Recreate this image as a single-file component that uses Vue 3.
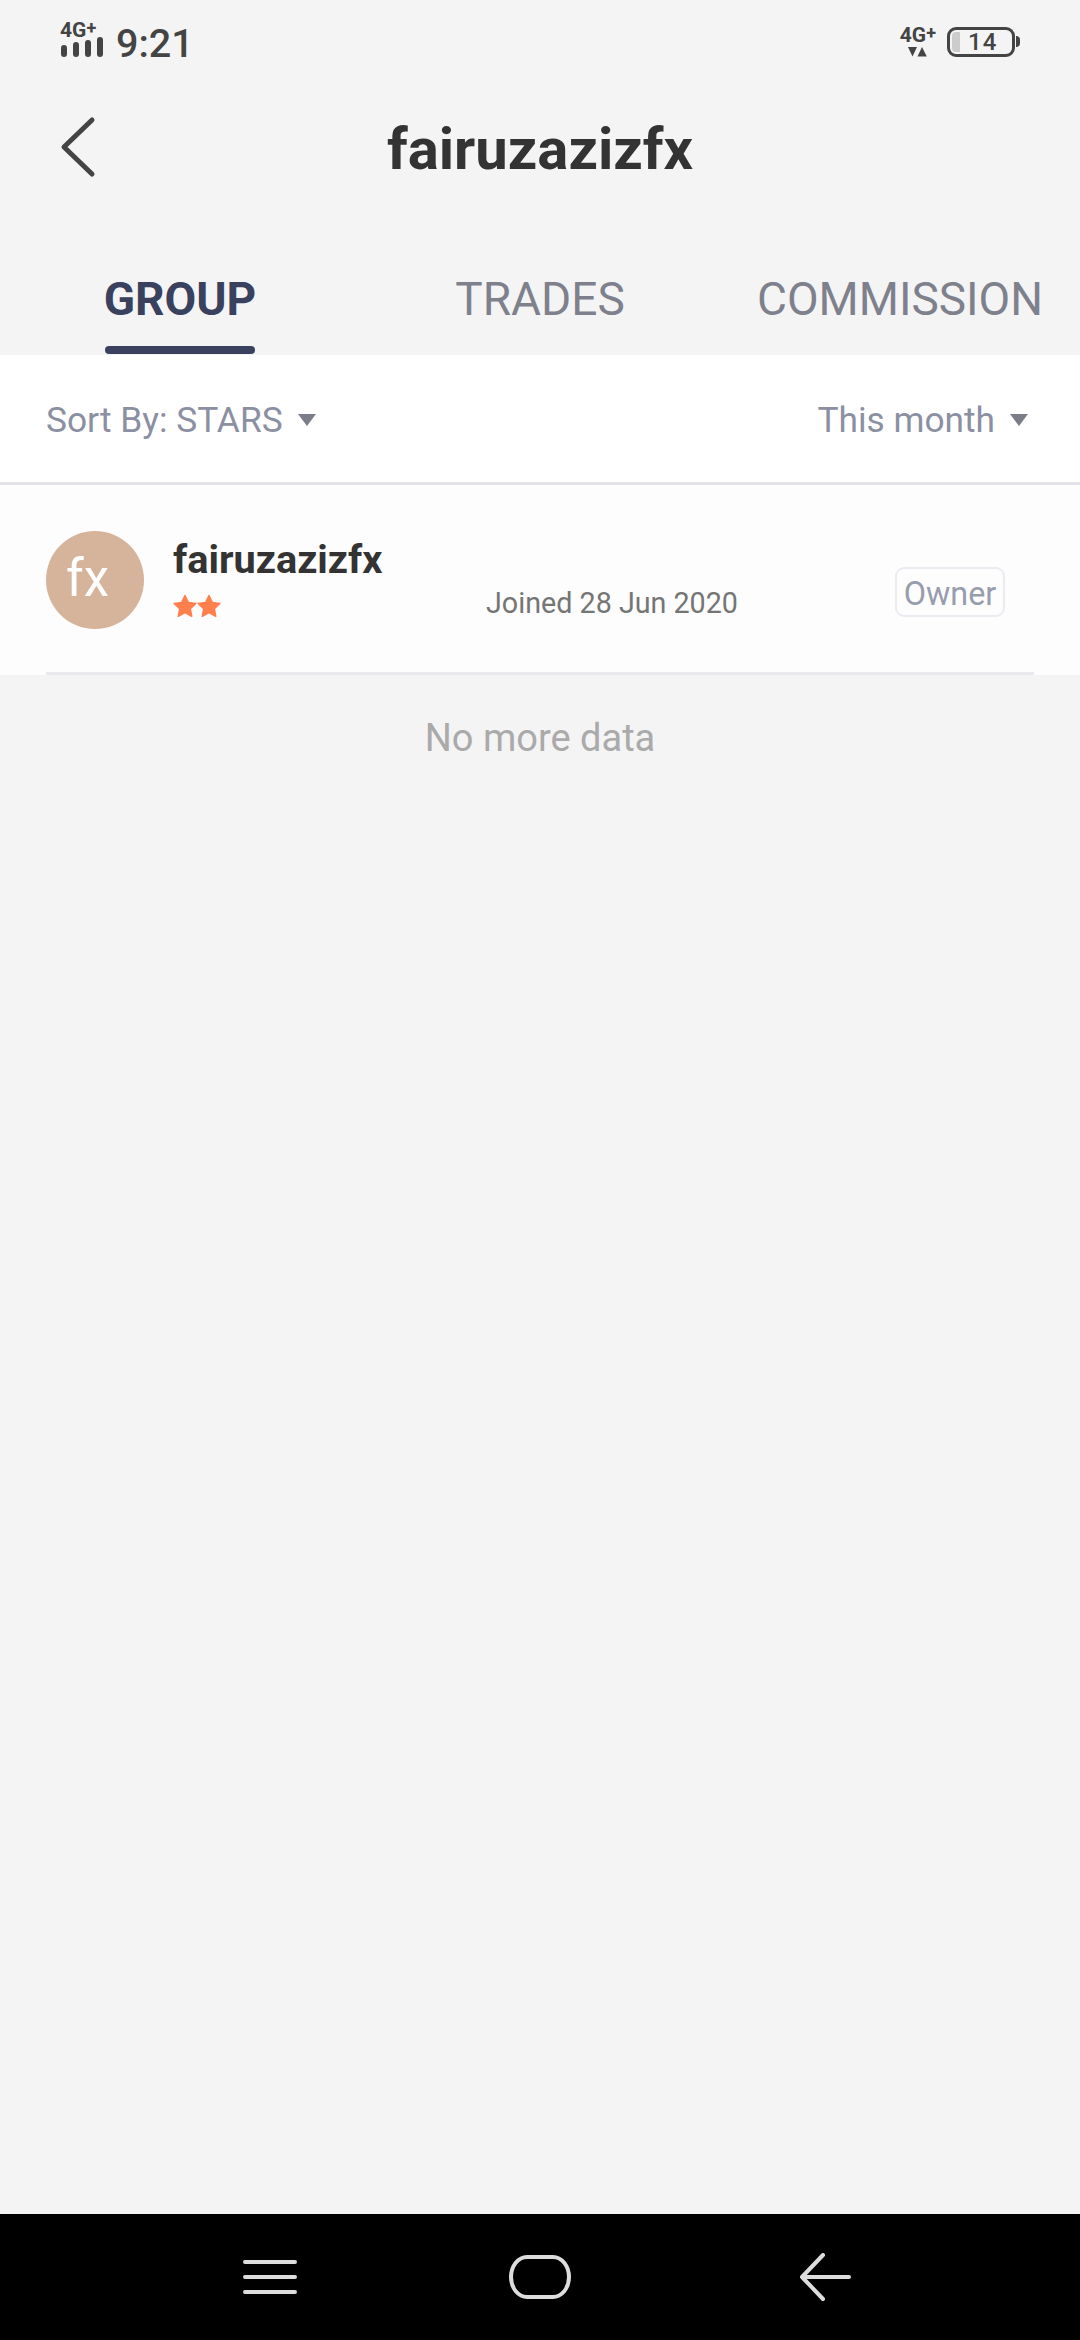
<template>
  <div class="screen">
    <div class="status-bar">
      <div class="status-left">
        <div class="signal">
          <span class="net">4G<sup>+</sup></span>
          <svg class="bars" width="44" height="20" viewBox="0 0 44 20">
            <rect x="1" y="8" width="6" height="12" rx="3" />
            <rect x="13" y="5" width="6" height="15" rx="3" />
            <rect x="25" y="3" width="6" height="17" rx="3" />
            <rect x="37" y="0" width="6" height="20" rx="3" />
          </svg>
        </div>
        <span class="time">9:21</span>
      </div>
      <div class="status-right">
        <div class="data">
          <span class="net">4G<sup>+</sup></span>
          <svg width="19" height="10" viewBox="0 0 19 10">
            <path d="M0 0h9L4.500 9.500zM14 0l4.800 9.500H9.500z" fill="#444" />
          </svg>
        </div>
        <div class="battery">
          <span class="battery-fill"></span>
          <span class="battery-text">14</span>
        </div>
        <span class="battery-nub"></span>
      </div>
    </div>

    <header class="title-bar">
      <svg class="back" width="36" height="62" viewBox="0 0 36 62">
        <path d="M32 4 4 31l28 27" fill="none" stroke="#444" stroke-width="5" stroke-linecap="round" stroke-linejoin="round" />
      </svg>
      <h1>fairuzazizfx</h1>
    </header>

    <nav class="tabs">
      <div v-for="tab in tabs" :key="tab" class="tab" :class="{ active: tab === 'GROUP' }">
        <span class="tab-label">{{ tab }}</span>
      </div>
    </nav>

    <div class="filters">
      <div class="filter">Sort By: STARS<i class="caret"></i></div>
      <div class="filter">This month<i class="caret"></i></div>
    </div>

    <div class="member">
      <div class="member-inner">
        <div class="avatar">fx</div>
        <div class="info">
          <div class="name">fairuzazizfx</div>
          <div class="stars">
            <svg v-for="n in 2" :key="n" width="24" height="24" viewBox="0 0 24 24">
              <path d="M12 1.500l3.300 6.900 7.600 1-5.600 5.300 1.400 7.600-6.700-3.700-6.700 3.700 1.400-7.600-5.600-5.300 7.600-1z" fill="#ff7f4d" stroke="#ff7f4d" stroke-width="1.500" stroke-linejoin="round" />
            </svg>
          </div>
        </div>
        <div class="joined">Joined 28 Jun 2020</div>
        <div class="role">Owner</div>
      </div>
    </div>

    <div class="no-more">No more data</div>

    <div class="nav-bar">
      <svg width="54" height="36" viewBox="0 0 54 36">
        <path d="M2 3h50M2 18h50M2 33h50" stroke="#ddd" stroke-width="4" stroke-linecap="round" />
      </svg>
      <div class="home-btn"></div>
      <svg width="52" height="48" viewBox="0 0 52 48">
        <path d="M24 2 3 24l21 22M3 24h47" fill="none" stroke="#ddd" stroke-width="4" stroke-linecap="round" stroke-linejoin="round" />
      </svg>
    </div>
  </div>
</template>

<script setup>
const tabs = ['GROUP', 'TRADES', 'COMMISSION']
</script>

<style scoped>
.screen {
  width: 1080px;
  height: 2340px;
  display: flex;
  flex-direction: column;
  background-color: #f4f4f4;
  font-family: Roboto, "Liberation Sans", sans-serif;
  overflow: hidden;
}

.status-bar {
  height: 84px;
  display: flex;
  justify-content: space-between;
  align-items: flex-start;
  padding: 22px 60px 0 60px;
  box-sizing: border-box;
  color: #444;
}

.status-left {
  display: flex;
  align-items: flex-start;
  gap: 12px;
}

.signal {
  display: flex;
  flex-direction: column;
}

.net {
  font-size: 21px;
  line-height: 16px;
  font-weight: 700;
  color: #444;
}

.net sup {
  font-size: 18px;
  line-height: 0;
  vertical-align: 3px;
}

.bars {
  fill: #444;
  margin-top: -1px;
}

.time {
  font-size: 39.500px;
  line-height: 42px;
  font-weight: 500;
  margin-top: 1px;
}

.status-right {
  display: flex;
  align-items: flex-start;
  padding-top: 5px;
}

.data {
  display: flex;
  flex-direction: column;
  align-items: center;
  gap: 4px;
  margin-right: 11px;
}

.battery {
  width: 68px;
  height: 30px;
  box-sizing: border-box;
  border: 3px solid #444;
  border-radius: 9px;
  display: flex;
  align-items: center;
}

.battery-fill {
  width: 8px;
  height: 20px;
  margin-left: 2px;
  background-color: #ccc;
  border-radius: 4px 0 0 4px;
}

.battery-text {
  margin-left: 8px;
  font-size: 24px;
  line-height: 24px;
  font-weight: 500;
  letter-spacing: 1px;
}

.battery-nub {
  width: 4px;
  height: 11px;
  margin-top: 9px;
  margin-left: 1px;
  background-color: #444;
  border-radius: 0 4px 4px 0;
}

.title-bar {
  height: 126px;
  box-sizing: border-box;
  padding-top: 3px;
  position: relative;
  display: flex;
  align-items: center;
  justify-content: center;
}

.back {
  position: absolute;
  left: 60px;
  top: 32px;
}

.title-bar h1 {
  margin: 0;
  font-size: 58px;
  font-weight: 700;
  color: #333;
}

.tabs {
  height: 145px;
  display: grid;
  grid-template-columns: repeat(3, 1fr);
}

.tab {
  display: flex;
  justify-content: center;
  align-items: flex-end;
}

.tab-label {
  height: 91px;
  box-sizing: border-box;
  padding-top: 4px;
  font-size: 46px;
  line-height: 62px;
  color: #7e818c;
}

.tab.active .tab-label {
  font-weight: 700;
  color: #3a415e;
  position: relative;
}

.tab.active .tab-label::after {
  content: "";
  position: absolute;
  left: 1px;
  right: 1px;
  bottom: 1px;
  height: 8px;
  border-radius: 4px;
  background-color: #3a415e;
}

.filters {
  height: 130px;
  box-sizing: border-box;
  display: flex;
  justify-content: space-between;
  align-items: center;
  padding: 2px 52px 0 46px;
  background-color: #fff;
  border-bottom: 3px solid #e3e3ea;
}

.filter {
  display: flex;
  align-items: center;
  font-size: 35.300px;
  color: #8a90a2;
}

.caret {
  width: 0;
  height: 0;
  margin-left: 15px;
  border-left: 9px solid transparent;
  border-right: 9px solid transparent;
  border-top: 12px solid #7b7e88;
}

.member {
  background-color: #fdfdfd;
  padding-left: 46px;
  padding-right: 46px;
}

.member-inner {
  height: 190px;
  box-sizing: border-box;
  display: flex;
  align-items: flex-start;
  padding-top: 46px;
  border-bottom: 3px solid #e8e9ed;
}

.avatar {
  width: 98px;
  height: 98px;
  box-sizing: border-box;
  padding: 0 15px 4px 0;
  border-radius: 50%;
  background-color: #d6b49b;
  color: #fff;
  font-size: 51px;
  font-weight: 400;
  display: flex;
  align-items: center;
  justify-content: center;
  flex-shrink: 0;
}

.info {
  margin-left: 29px;
  margin-top: 6px;
  width: 313px;
}

.name {
  font-size: 39.700px;
  line-height: 46px;
  font-weight: 700;
  color: #333;
}

.stars {
  display: flex;
  margin-top: 11px;
  height: 24px;
}

.joined {
  margin-top: 54px;
  font-size: 28.700px;
  line-height: 36px;
  color: #757575;
}

.role {
  margin-left: 157px;
  margin-top: 36px;
  padding-top: 3px;
  width: 110px;
  height: 50px;
  box-sizing: border-box;
  border: 2px solid #ebecf1;
  border-radius: 9px;
  display: flex;
  align-items: center;
  justify-content: center;
  font-size: 32.400px;
  color: #989dae;
}

.no-more {
  margin-top: 42px;
  text-align: center;
  font-size: 38px;
  line-height: 42px;
  color: #aaa;
}

.nav-bar {
  margin-top: auto;
  height: 126px;
  box-sizing: border-box;
  padding-left: 243px;
  background-color: #000;
  display: flex;
  align-items: center;
}

.home-btn {
  width: 62px;
  height: 44px;
  margin: 0 228px 0 212px;
  box-sizing: border-box;
  border: 4px solid #ddd;
  border-radius: 18px / 22px;
}
</style>

<style>
html, body {
  margin: 0;
  background: #f4f4f4;
}
</style>
